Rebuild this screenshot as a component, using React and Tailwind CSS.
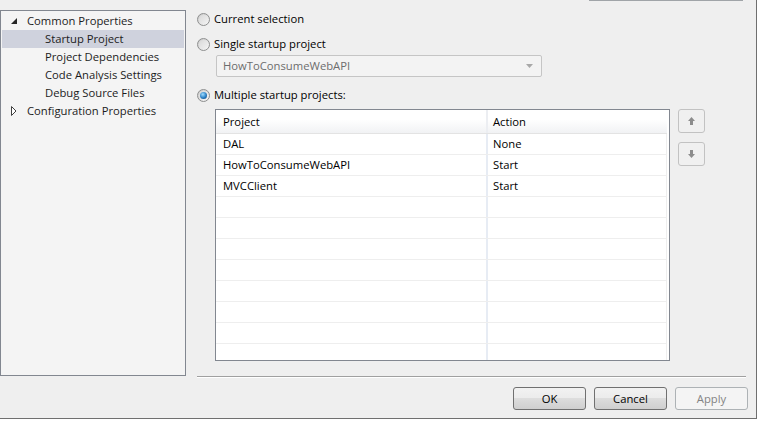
import React from 'react'

const treeItems = [
  { label: 'Common Properties', level: 0, icon: 'open' },
  { label: 'Startup Project', level: 1, selected: true },
  { label: 'Project Dependencies', level: 1 },
  { label: 'Code Analysis Settings', level: 1 },
  { label: 'Debug Source Files', level: 1 },
  { label: 'Configuration Properties', level: 0, icon: 'closed' },
]

const rows = [
  ['DAL', 'None'],
  ['HowToConsumeWebAPI', 'Start'],
  ['MVCClient', 'Start'],
  ['', ''],
  ['', ''],
  ['', ''],
  ['', ''],
  ['', ''],
  ['', ''],
  ['', ''],
  ['', ''],
]

function Radio({ checked }) {
  return (
    <span className="flex h-[13px] w-[13px] shrink-0 items-center justify-center rounded-full border border-[#8e8f8f] bg-gradient-to-br from-[#c8c8c8] to-[#fafafa]">
      <span className="flex h-[9px] w-[9px] items-center justify-center rounded-full bg-gradient-to-br from-[#d9d9d9] to-[#f2f2f2]">
        {checked && (
          <span className="h-[7px] w-[7px] rounded-full bg-[radial-gradient(circle_at_40%_35%,#9fdcff,#2a7fc4_55%,#0c3c70)]" />
        )}
      </span>
    </span>
  )
}

function TreeIcon({ type }) {
  if (type === 'open')
    return (
      <svg width="6" height="6" viewBox="0 0 6 6">
        <polygon points="6,0 6,6 0,6" fill="#262626" />
      </svg>
    )
  if (type === 'closed')
    return (
      <svg width="6" height="10" viewBox="0 0 6 10">
        <polygon points="0.5,0.5 5,5 0.5,9.5" fill="#fff" stroke="#404040" strokeWidth="1" />
      </svg>
    )
  return null
}

function ArrowButton({ down }) {
  return (
    <div className="flex h-[24px] w-[27px] items-center justify-center rounded-[3px] border border-[#c2c2c2] bg-[#f0f0f0]">
      <svg width="7" height="8" viewBox="0 0 7 8" className={down ? 'rotate-180' : ''}>
        <polygon points="3.5,0 7,4 0,4" fill="#8c8c8c" />
        <rect x="2" y="4" width="3" height="4" fill="#8c8c8c" />
      </svg>
    </div>
  )
}

function DialogButton({ children, disabled }) {
  return (
    <button
      className={
        disabled
          ? 'flex h-[23px] w-[73px] items-center justify-center rounded-[3px] border border-[#adb2b5] bg-[#f4f4f4] text-[#838383]'
          : 'flex h-[23px] w-[73px] items-center justify-center rounded-[3px] border border-[#707070] bg-[linear-gradient(#f2f2f2,#ebebeb_50%,#dddddd_50%,#cfcfcf)] text-black'
      }
    >
      {children}
    </button>
  )
}

export default function App() {
  return (
    <div className="h-[424px] w-[763px] bg-white font-['Open_Sans',sans-serif] text-[11.25px] leading-none text-black">
      <div className="flex h-[419px] w-[757px] flex-col border-b border-r border-[#6f6f6f] bg-[#efefef]">
        {/* partial control edge at top */}
        <div className="ml-[589px] h-px w-[154px] shrink-0 bg-[#a0a4a8]" />

        <div className="flex">
          {/* Tree */}
          <div className="mt-[9px] h-[366px] w-[186px] shrink-0 border border-[#828790] bg-[#f4f4f4] pt-[1px] text-[#1c1c1c]">
            {treeItems.map((item) => (
              <div
                key={item.label}
                className={
                  'mx-[1px] flex h-[18px] items-center ' + (item.selected ? 'bg-[#cfd2dd]' : '')
                }
              >
                {item.level === 0 ? (
                  <>
                    <span className="ml-[9px] flex w-[16px] items-center">
                      <TreeIcon type={item.icon} />
                    </span>
                    <span>{item.label}</span>
                  </>
                ) : (
                  <span className="ml-[43px]">{item.label}</span>
                )}
              </div>
            ))}
          </div>

          {/* Right side */}
          <div className="ml-[11px] flex flex-col">
            <div className="mt-[9px] flex h-[18px] items-center gap-[4px]">
              <Radio />
              <span>Current selection</span>
            </div>
            <div className="mt-[7px] flex h-[18px] items-center gap-[4px]">
              <Radio />
              <span>Single startup project</span>
            </div>
            <div className="ml-[19px] mt-[2px] flex h-[22px] w-[326px] items-center justify-between rounded-[2px] border border-[#c5c5c5] bg-[#f3f3f3] pl-[6px] pr-[8px] text-[#6d6d6d]">
              <span>HowToConsumeWebAPI</span>
              <svg width="7" height="4" viewBox="0 0 7 4">
                <polygon points="0,0 7,0 3.5,4" fill="#a8a8a8" />
              </svg>
            </div>
            <div className="mt-[9px] flex h-[18px] items-center gap-[4px]">
              <Radio checked />
              <span>Multiple startup projects:</span>
            </div>

            <div className="mt-[5px] flex">
              {/* Grid */}
              <div className="ml-[18px] h-[252px] w-[455px] overflow-hidden border border-[#828790] bg-white">
                <div className="flex h-[24px] w-[451px] border-b border-[#e3e3e3] bg-[linear-gradient(#ffffff,#ffffff_40%,#f1f2f4)]">
                  <div className="flex w-[272px] items-center border-r-2 border-[#eceef2] pl-[7px]">Project</div>
                  <div className="flex flex-1 items-center pl-[5px]">Action</div>
                </div>
                {rows.map((r, i) => (
                  <div key={i} className="flex h-[21px] w-[451px] border-b border-r border-[#eeeeee]">
                    <div className="flex w-[272px] items-center border-r-2 border-[#e7ecf4] pl-[7px]">{r[0]}</div>
                    <div className="flex flex-1 items-center pl-[5px]">{r[1]}</div>
                  </div>
                ))}
              </div>

              <div className="ml-[8px] flex flex-col gap-[9px]">
                <ArrowButton />
                <ArrowButton down />
              </div>
            </div>

            <div className="mt-[15px] h-px w-[549px] bg-[#a0a0a0]" />
            <div className="h-px w-[549px] bg-white" />
          </div>
        </div>

        <div className="flex justify-end gap-[8px] pr-[8px] pt-[9px]">
          <DialogButton>OK</DialogButton>
          <DialogButton>Cancel</DialogButton>
          <DialogButton disabled>Apply</DialogButton>
        </div>
      </div>
    </div>
  )
}
